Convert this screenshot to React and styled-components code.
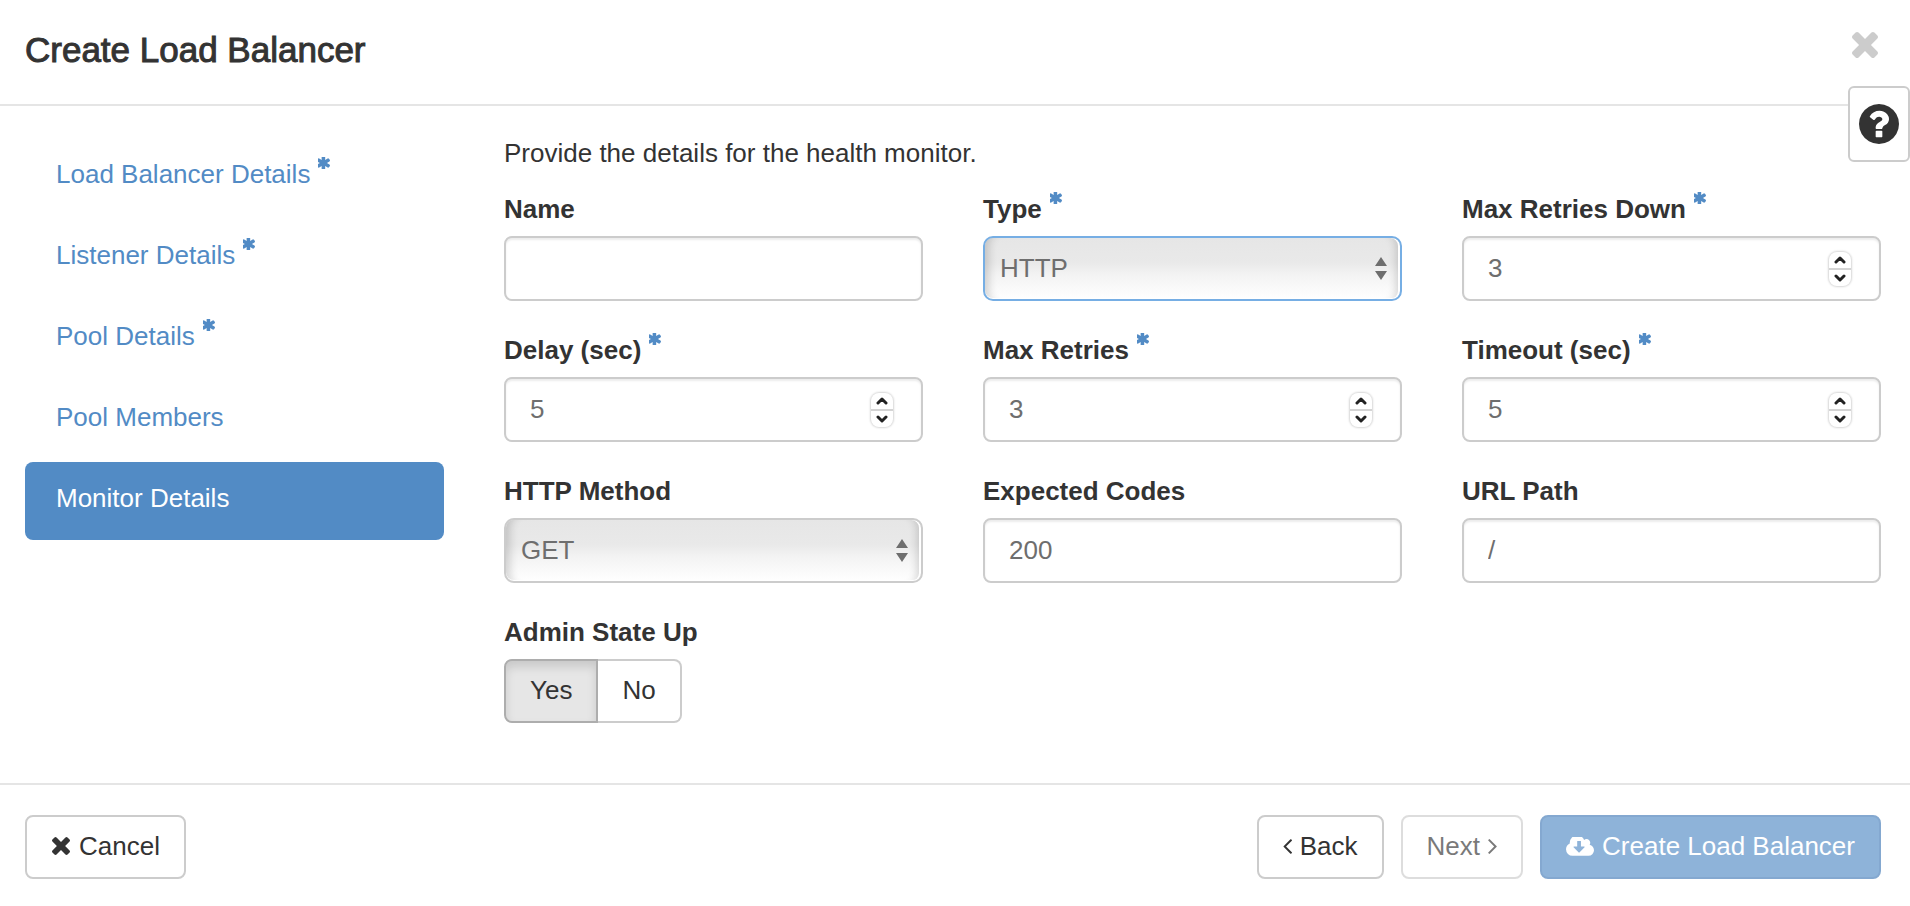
import { useState } from "react";
import styled, { createGlobalStyle } from "styled-components";

const GlobalStyle = createGlobalStyle`
  * {
    box-sizing: border-box;
  }
  body {
    margin: 0;
    background-color: #fff;
    color: #333;
    font-family: "Liberation Sans", Arial, sans-serif;
    font-size: 26px;
    line-height: 37px;
  }
  button, input, select {
    font: inherit;
    color: inherit;
    margin: 0;
  }
`;

const Dialog = styled.form`
  position: relative;
  display: flex;
  flex-direction: column;
  min-height: 100vh;
`;

const Header = styled.header`
  display: flex;
  align-items: flex-start;
  justify-content: space-between;
  padding: 32px 32px 36px 25px;
  border-bottom: 2px solid #e5e5e5;
`;

const Title = styled.h1`
  margin: 0;
  font-size: 35px;
  font-weight: 400;
  line-height: 36px;
  -webkit-text-stroke: 1px #333;
`;

const CloseButton = styled.button`
  display: flex;
  padding: 0;
  border: none;
  background: none;
  color: #ccc;
  cursor: pointer;
`;

const HelpButton = styled.button`
  position: absolute;
  top: 86px;
  right: 0;
  display: flex;
  align-items: center;
  justify-content: center;
  width: 62px;
  height: 76px;
  padding: 0;
  border: 2px solid #ccc;
  border-radius: 6px;
  background-color: #fff;
  cursor: pointer;
`;

const Body = styled.div`
  flex: 1;
  display: grid;
  grid-template-columns: repeat(4, minmax(0, 1fr));
  column-gap: 60px;
  padding: 29px 29px 59px 25px;
`;

const Steps = styled.nav`
  display: flex;
  flex-direction: column;
  gap: 3px;
  padding-top: 3px;
`;

const Step = styled.a`
  height: 78px;
  padding: 18px 31px;
  border-radius: 8px;
  text-decoration: none;
  white-space: nowrap;
  color: ${(props) => (props.$active ? "#fff" : "#528bc5")};
  background-color: ${(props) => (props.$active ? "#528bc5" : "transparent")};
`;

const Panel = styled.section`
  grid-column: span 3;
`;

const Intro = styled.p`
  margin: 0 0 19px;
`;

const Fields = styled.div`
  display: grid;
  grid-template-columns: repeat(3, minmax(0, 1fr));
  gap: 31px 60px;
`;

const Field = styled.div`
  display: flex;
  flex-direction: column;
  gap: 8px;
`;

const Label = styled.label`
  height: 37px;
  font-weight: 700;
  white-space: nowrap;
`;

const Control = styled.div`
  position: relative;
  display: flex;
`;

const Input = styled.input`
  width: 100%;
  height: 65px;
  padding: 0 24px;
  border: 2px solid #ccc;
  border-radius: 8px;
  outline: none;
  background-color: #fff;
  color: #6e6e6e;
  box-shadow: inset 0 2px 2px rgba(0, 0, 0, 0.075);
  appearance: textfield;

  &::-webkit-inner-spin-button {
    appearance: none;
    margin: 0;
  }
`;

const Select = styled.select`
  width: 100%;
  height: 65px;
  padding: 0 40px 0 15px;
  border: 2px solid ${(props) => (props.$focused ? "#76aee4" : "#ccc")};
  border-radius: 10px;
  outline: none;
  appearance: none;
  color: #6e6e6e;
  background: linear-gradient(#e6e6e6, #e9e9e9 40%, #f3f3f3 60%, #fff);
  box-shadow:
    inset -2px 0 0 #fff,
    inset 0 -1px 0 #fff,
    inset 12px 0 8px -8px rgba(0, 0, 0, 0.16),
    inset -12px 0 8px -8px rgba(0, 0, 0, 0.16);
`;

const SelectArrows = styled.svg`
  position: absolute;
  top: 21px;
  right: 15px;
  pointer-events: none;
`;

const Spinner = styled.div`
  position: absolute;
  top: 16px;
  right: 30px;
  display: flex;
  flex-direction: column;
  width: 22px;
  height: 34px;
  border-radius: 8px;
  background-color: #fff;
  box-shadow: 0 0 2px 1px rgba(0, 0, 0, 0.16);
  overflow: hidden;
`;

const SpinButton = styled.button`
  flex: 1;
  display: flex;
  align-items: center;
  justify-content: center;
  padding: 0;
  border: none;
  background: none;
  color: #222;

  & + & {
    border-top: 2px solid #d4d4d4;
  }
`;

const Toggle = styled.div`
  display: flex;
`;

const ToggleButton = styled.button`
  height: 64px;
  padding: 0 24px 2px;
  border: 2px solid ${(props) => (props.$active ? "#adadad" : "#ccc")};
  background-color: ${(props) => (props.$active ? "#e6e6e6" : "#fff")};
  box-shadow: ${(props) => (props.$active ? "inset 0 6px 10px rgba(0, 0, 0, 0.125)" : "none")};

  &:first-child {
    border-radius: 8px 0 0 8px;
  }
  &:last-child {
    border-left: none;
    border-radius: 0 8px 8px 0;
  }
`;

const Footer = styled.footer`
  display: flex;
  justify-content: space-between;
  padding: 30px 29px 27px 25px;
  border-top: 2px solid #e5e5e5;
`;

const Actions = styled.div`
  display: flex;
  gap: 17px;
`;

const Button = styled.button`
  display: flex;
  align-items: center;
  gap: 8px;
  height: 64px;
  padding: 0 24px 2px;
  border: 2px solid #ccc;
  border-radius: 8px;
  background-color: #fff;
  white-space: nowrap;
  cursor: pointer;

  &:disabled {
    opacity: 0.65;
    cursor: not-allowed;
  }
`;

const PrimaryButton = styled(Button)`
  border-color: #437bb8;
  background-color: #528bc5;
  color: #fff;
`;

const Star = styled.svg`
  margin-left: 8px;
  vertical-align: 14px;
  fill: #528bc5;
`;

const icons = {
  times: {
    box: "302 366 1188 1188",
    d: "M1490 1322q0 40-28 68l-136 136q-28 28-68 28t-68-28l-294-294-294 294q-28 28-68 28t-68-28l-136-136q-28-28-28-68t28-68l294-294-294-294q-28-28-28-68t28-68l136-136q28-28 68-28t68 28l294 294 294-294q28-28 68-28t68 28l136 136q28 28 28 68t-28 68l-294 294 294 294q28 28 28 68z",
  },
  question: {
    box: "128 128 1536 1536",
    d: "M1024 1376v-192q0-14-9-23t-23-9h-192q-14 0-23 9t-9 23v192q0 14 9 23t23 9h192q14 0 23-9t9-23zm256-672q0-88-55.5-163t-138.5-116-170-41q-243 0-371 213-15 24 8 42l132 100q7 6 19 6 16 0 25-12 53-68 86-92 34-24 86-24 48 0 85.5 26t37.5 59q0 38-20 61t-68 45q-63 28-115.5 86.5t-52.5 125.5v36q0 14 9 23t23 9h192q14 0 23-9t9-23q0-19 21.5-49.5t54.5-49.5q32-18 49-28.5t46-35 44.5-48 28-60.5 12.5-81zm384 192q0 209-103 385.5t-279.5 279.5-385.5 103-385.5-103-279.5-279.5-103-385.5 103-385.5 279.5-279.5 385.5-103 385.5 103 279.5 279.5 103 385.5z",
  },
  cloud: {
    box: "64 256 1920 1280",
    d: "M1344 928q0-14-9-23t-23-9h-224v-352q0-13-9.5-22.5t-22.5-9.5h-192q-13 0-22.5 9.5t-9.5 22.5v352h-224q-13 0-22.5 9.5t-9.5 22.5q0 14 9 23l352 352q9 9 23 9t23-9l351-351q10-12 10-24zm640 224q0 159-112.5 271.5t-271.5 112.5h-1088q-185 0-316.5-131.5t-131.5-316.5q0-130 70-240t188-165q-2-30-2-43 0-212 150-362t362-150q156 0 285.5 87t188.5 231q71-62 166-62 106 0 181 75t75 181q0 76-41 138 130 31 213.5 135.5t83.5 238.5z",
  },
  left: {
    box: "592 459 611 1002",
    d: "M1203 544q0 13-10 23l-393 393 393 393q10 10 10 23t-10 23l-50 50q-10 10-23 10t-23-10l-466-466q-10-10-10-23t10-23l466-466q10-10 23-10t23 10l50 50q10 10 10 23z",
  },
  right: {
    box: "589 459 582 1002",
    d: "M1171 960q0 13-10 23l-466 466q-10 10-23 10t-23-10l-50-50q-10-10-10-23t10-23l393-393-393-393q-10-10-10-23t10-23l50-50q10-10 23-10t23 10l466 466q10 10 10 23z",
  },
};

const Icon = ({ name, width, height = width }) => (
  <svg width={width} height={height} viewBox={icons[name].box} fill="currentColor" aria-hidden="true">
    <path d={icons[name].d} />
  </svg>
);

const Required = () => (
  <Star width="12" height="12" viewBox="244 256 1304 1280" role="img" aria-label="required">
    <path d="M1482 1050q46 26 59.5 77.5t-12.5 97.5l-64 110q-26 46-77.5 59.5t-97.5-12.5l-266-153v307q0 52-38 90t-90 38h-128q-52 0-90-38t-38-90v-307l-266 153q-46 26-97.5 12.5t-77.5-59.5l-64-110q-26-46-12.5-97.5t59.5-77.5l266-154-266-154q-46-26-59.5-77.5t12.5-97.5l64-110q26-46 77.5-59.5t97.5 12.5l266 153v-307q0-52 38-90t90-38h128q52 0 90 38t38 90v307l266-153q46-26 97.5-12.5t77.5 59.5l64 110q26 46 12.5 97.5t-59.5 77.5l-266 154z" />
  </Star>
);

const Chevron = ({ d }) => (
  <svg width="12" height="8" viewBox="0 0 12 8" fill="none" stroke="currentColor" strokeWidth="3" strokeLinecap="round" strokeLinejoin="round" aria-hidden="true">
    <path d={d} />
  </svg>
);

const TextField = ({ id, label, value = "" }) => (
  <Field>
    <Label htmlFor={id}>{label}</Label>
    <Input id={id} type="text" defaultValue={value} />
  </Field>
);

const NumberField = ({ id, label, initial }) => {
  const [value, setValue] = useState(initial);

  return (
    <Field>
      <Label htmlFor={id}>
        {label}
        <Required />
      </Label>
      <Control>
        <Input id={id} type="number" value={value} onChange={(e) => setValue(e.target.value)} />
        <Spinner>
          <SpinButton type="button" tabIndex={-1} aria-label={`Increase ${label}`} onClick={() => setValue(Number(value) + 1)}>
            <Chevron d="M2 6l4-4 4 4" />
          </SpinButton>
          <SpinButton type="button" tabIndex={-1} aria-label={`Decrease ${label}`} onClick={() => setValue(Number(value) - 1)}>
            <Chevron d="M2 2l4 4 4-4" />
          </SpinButton>
        </Spinner>
      </Control>
    </Field>
  );
};

const SelectField = ({ id, label, options, required, focused }) => (
  <Field>
    <Label htmlFor={id}>
      {label}
      {required && <Required />}
    </Label>
    <Control>
      <Select id={id} $focused={focused}>
        {options.map((option) => (
          <option key={option}>{option}</option>
        ))}
      </Select>
      <SelectArrows width="12" height="23" viewBox="0 0 12 23" fill="#6e6e6e" aria-hidden="true">
        <path d="M6 0l6 9H0zM6 23l6-9H0z" />
      </SelectArrows>
    </Control>
  </Field>
);

const steps = [
  { name: "Load Balancer Details", required: true },
  { name: "Listener Details", required: true },
  { name: "Pool Details", required: true },
  { name: "Pool Members" },
  { name: "Monitor Details" },
];

const App = () => {
  const [step, setStep] = useState("Monitor Details");
  const [adminUp, setAdminUp] = useState(true);

  return (
    <Dialog onSubmit={(e) => e.preventDefault()}>
      <GlobalStyle />
      <Header>
        <Title>Create Load Balancer</Title>
        <CloseButton type="button" aria-label="Close">
          <Icon name="times" width={26} />
        </CloseButton>
      </Header>
      <HelpButton type="button" aria-label="Help">
        <Icon name="question" width={40} />
      </HelpButton>
      <Body>
        <Steps>
          {steps.map((item) => (
            <Step key={item.name} href="#" $active={item.name === step} onClick={() => setStep(item.name)}>
              {item.name}
              {item.required && <Required />}
            </Step>
          ))}
        </Steps>
        <Panel>
          <Intro>Provide the details for the health monitor.</Intro>
          <Fields>
            <TextField id="name" label="Name" />
            <SelectField id="type" label="Type" options={["HTTP", "HTTPS", "PING", "TCP"]} required focused />
            <NumberField id="retries-down" label="Max Retries Down" initial={3} />
            <NumberField id="delay" label="Delay (sec)" initial={5} />
            <NumberField id="retries" label="Max Retries" initial={3} />
            <NumberField id="timeout" label="Timeout (sec)" initial={5} />
            <SelectField id="method" label="HTTP Method" options={["GET", "HEAD", "POST"]} />
            <TextField id="codes" label="Expected Codes" value="200" />
            <TextField id="path" label="URL Path" value="/" />
            <Field>
              <Label as="span" id="admin-state">Admin State Up</Label>
              <Toggle role="group" aria-labelledby="admin-state">
                <ToggleButton type="button" $active={adminUp} aria-pressed={adminUp} onClick={() => setAdminUp(true)}>
                  Yes
                </ToggleButton>
                <ToggleButton type="button" $active={!adminUp} aria-pressed={!adminUp} onClick={() => setAdminUp(false)}>
                  No
                </ToggleButton>
              </Toggle>
            </Field>
          </Fields>
        </Panel>
      </Body>
      <Footer>
        <Button type="button">
          <Icon name="times" width={20} height={18} />
          Cancel
        </Button>
        <Actions>
          <Button type="button">
            <Icon name="left" width={9} height={15} />
            Back
          </Button>
          <Button type="button" disabled>
            Next
            <Icon name="right" width={9} height={15} />
          </Button>
          <PrimaryButton type="submit" disabled>
            <Icon name="cloud" width={28} height={19} />
            Create Load Balancer
          </PrimaryButton>
        </Actions>
      </Footer>
    </Dialog>
  );
};

export default App;
